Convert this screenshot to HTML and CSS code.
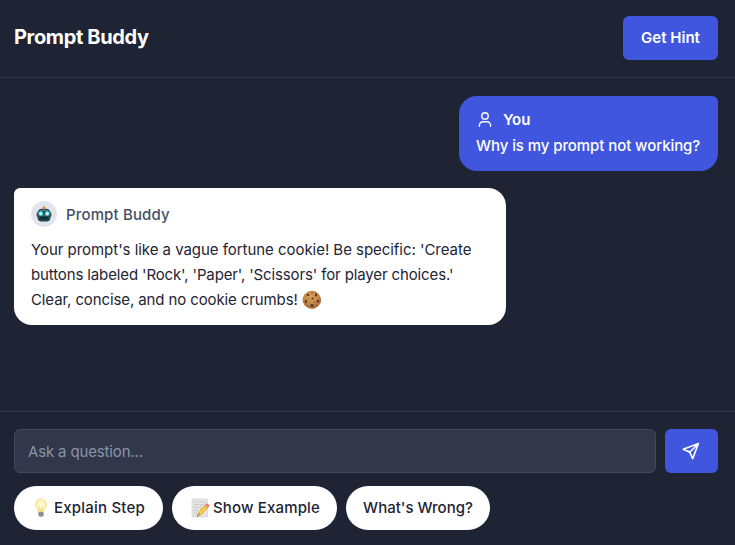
FILE: index.html
```html
<!DOCTYPE html>
<html lang="en">
<head>
<meta charset="utf-8">
<title>Prompt Buddy</title>
<link rel="stylesheet" href="styles.css">
</head>
<body>
<div class="app">
  <header class="header">
    <h1 class="title">Prompt Buddy</h1>
    <button class="hint">Get Hint</button>
  </header>
  <main class="messages">
    <section class="bubble user">
      <div class="user-head">
        <svg class="person" viewBox="0 0 18 18" fill="none" stroke="currentColor" stroke-width="1.400" stroke-linecap="round"><circle cx="9" cy="5.900" r="3.200"/><path d="M3.400 16.300v-.9a3.600 3.600 0 0 1 3.600-3.600h4a3.600 3.600 0 0 1 3.600 3.600v.9"/></svg>
        <span class="you">You</span>
      </div>
      <p class="question">Why is my prompt not working?</p>
    </section>
    <section class="bubble bot">
      <div class="bot-head">
        <span class="avatar">
          <svg class="robot" viewBox="0 0 16 16"><path d="M8 1v4" stroke="#a65b31" stroke-width="1.2"/><circle cx="8" cy="1.8" r="1.4" fill="#ed9240"/><rect x=".6" y="6" width="14.8" height="5" rx="1.6" fill="#8f3b35"/><path d="M1.600 6q1-3.400 6.400-3.400T14.400 6v7q-1 2.400-3 2.400H4.600Q2.600 15.400 1.600 13z" fill="#214953"/><path d="M3.500 5q1-1.500 4.500-1.500T12.500 5z" fill="#4f8087"/><circle cx="8" cy="1.800" r="1.300" fill="#ed9240"/><circle cx="4.700" cy="7.600" r="2.500" fill="#39c4d8"/><circle cx="11.300" cy="7.600" r="2.500" fill="#39c4d8"/><circle cx="4.700" cy="7.600" r="1.400" fill="#d8ffff"/><circle cx="11.300" cy="7.600" r="1.400" fill="#d8ffff"/><path d="M8 7.800 9 9.800H7z" fill="#e0523b"/><rect x="4.200" y="11" width="7.600" height="2.600" rx=".8" fill="#102d36"/></svg>
        </span>
        <span class="name">Prompt Buddy</span>
      </div>
      <p class="answer"><span class="line l1">Your prompt's like a vague fortune cookie! Be specific: 'Create</span> <span class="line l2">buttons labeled 'Rock', 'Paper', 'Scissors' for player choices.'</span> <span class="line l3"><span>Clear, concise, and no cookie crumbs!</span><svg class="cookie" viewBox="0 0 20 20"><defs><radialGradient id="dough" cx=".45" cy=".35" r=".65"><stop offset="0" stop-color="#dda45d"/><stop offset=".65" stop-color="#c18543"/><stop offset="1" stop-color="#986030"/></radialGradient></defs><path d="M10 1.200 14 2l3 3 1.800 4-.5 4-2.800 3.500-4 2-4.500-.4-3.700-2.300L1.200 12l-.1-4L3 4.300 6 2z" fill="url(#dough)" stroke="#ad7039" stroke-width=".7" stroke-linejoin="round"/><g fill="#513323"><ellipse cx="6" cy="5" rx="1.400" ry="1"/><ellipse cx="14" cy="5" rx="1.100" ry="1.400"/><circle cx="10.500" cy="8.500" r="1.100"/><ellipse cx="4" cy="11.500" rx="1.100" ry="1.400"/><circle cx="15.800" cy="11" r="1.200"/><circle cx="10" cy="15.500" r="1.400"/></g><g fill="#805025"><circle cx="10" cy="3" r=".7"/><circle cx="7" cy="9" r=".6"/><circle cx="12.500" cy="12" r=".7"/></g></svg></span></p>
    </section>
  </main>
  <footer class="footer">
    <div class="ask">
      <input class="input" type="text" placeholder="Ask a question…" aria-label="Ask a question">
      <button class="send" aria-label="Send"><svg class="plane" viewBox="0 0 18 18" fill="none" stroke="currentColor" stroke-width="1.600" stroke-linejoin="round" stroke-linecap="round"><path d="M16.400 1.500 1.200 7.200 7.800 10.300 10.700 16.600zM7.800 10.300 16.400 1.500M8 10.100l-1.900-.8"/></svg></button>
    </div>
    <div class="chips">
      <button class="chip explain"><svg class="bulb" viewBox="0 0 14 20"><defs><radialGradient id="glow" cx=".5" cy=".45" r=".55"><stop offset="0" stop-color="#fffde8"/><stop offset=".6" stop-color="#fff4b8"/><stop offset="1" stop-color="#f5db78"/></radialGradient></defs><path d="M7 1a5.500 5.500 0 0 0-5.500 5.500C1.500 9.500 4 10.500 4.300 14h5.400c.3-3.500 2.800-4.500 2.800-7.500A5.500 5.500 0 0 0 7 1z" fill="url(#glow)" stroke="#f2dc8e" stroke-width=".6"/><path d="M5.500 8 6.300 13h1.400L8.500 8" fill="none" stroke="#e8c866" stroke-width=".6"/><path d="M4.400 14h5.200v3.300L8.200 19H5.800l-1.400-1.700z" fill="#a4a5a4"/><path d="M4.400 15.200h5.200M4.600 16.900h4.800" stroke="#626668" stroke-width=".6"/></svg><span>Explain Step</span></button>
      <button class="chip example"><svg class="memo" viewBox="0 0 18 20"><path d="M1 1h15.500v18H1z" fill="#e5e5e5" stroke="#cfcfcf" stroke-width=".6"/><path d="M3 4h3m1 0h3m1 0h3M3 6.800h5m1 0h4M3 9.600h4m1 0h3M3 12.400h4M3 15.200h3" stroke="#bbb" stroke-width=".8"/><path d="m6 18.500 1.300-4.600 7.200-7.400 3 2.900-7.300 7.500z" fill="#f1b72f"/><path d="m8.800 15.500 7.200-7.400" stroke="#ffdc62" stroke-width="1.200"/><path d="m14.500 6.500 1.200-1.100q1.200-.2 2.300 1.600l.1 1.500-.7.800z" fill="#ea756b"/><path d="m13.700 7.300 3 2.900" stroke="#87949b" stroke-width="1"/><path d="m6 18.500 1.300-4.600 2.900 3z" fill="#d1a46b"/><path d="m6 18.500.4-1.500 1.100 1z" fill="#333"/></svg><span>Show Example</span></button>
      <button class="chip wrong"><span>What's Wrong?</span></button>
    </div>
  </footer>
</div>
</body>
</html>
```
FILE: styles.css
```css
* { box-sizing: border-box; }
body { margin: 0; background: #1e2434; font-family: Inter, "Liberation Sans", sans-serif; font-size: 15px; }
button, input { font: inherit; }
button { border: 0; padding: 0; }
h1, p { margin: 0; }
svg { display: block; flex: none; }
.app { height: 545px; display: flex; flex-direction: column; overflow: hidden; }
.header { height: 78px; padding: 0 17px 2px 14px; display: flex; align-items: center; justify-content: space-between; border-bottom: 1px solid #323849; }
.title { color: #fff; font-size: 20px; line-height: 28px; font-weight: 700; letter-spacing: -0.35px; padding-bottom: 1px; }
.hint { width: 95px; height: 44px; border-radius: 6px; background: #4056df; color: #fff; font-weight: 600; white-space: nowrap; }
.messages { flex: 1; padding: 18px 17px 0 14px; display: flex; flex-direction: column; gap: 17px; }
.bubble { white-space: nowrap; }
.user { align-self: flex-end; width: 259px; height: 75px; padding: 11px 17px; border-radius: 18px 6px 18px 18px; background: #4056df; color: #fff; }
.user-head { height: 26px; padding-bottom: 2px; display: flex; align-items: center; gap: 9px; }
.person { width: 18px; height: 18px; }
.you { font-weight: 600; letter-spacing: -0.1px; }
.question { line-height: 25px; font-weight: 500; letter-spacing: -0.08px; }
.bot { width: 492px; height: 137px; padding: 13px 17px; border-radius: 6px 18px 18px 18px; background: #fff; color: #1e2434; }
.bot-head { display: flex; align-items: center; gap: 9px; height: 26px; margin-bottom: 10px; }
.avatar { width: 26px; height: 26px; border-radius: 50%; background: #e1e5ee; display: grid; place-items: center; }
.robot { width: 16px; height: 16px; }
.name { color: #465066; font-weight: 500; letter-spacing: 0.15px; }
.answer { line-height: 25px; }
.line { display: block; }
.l1 { letter-spacing: -0.04px; }
.l2 { letter-spacing: -0.13px; }
.l3 { display: flex; align-items: center; gap: 4px; letter-spacing: -0.11px; }
.cookie { width: 20px; height: 20px; }
.footer { height: 134px; padding: 17px 17px 15px 14px; border-top: 1px solid #323849; }
.ask { display: flex; gap: 9px; }
.input { flex: 1; height: 44px; padding: 0 13px; border: 1px solid #42495c; border-radius: 6px; background: #32384a; color: #fff; letter-spacing: -0.15px; }
.input::placeholder { color: #8994aa; opacity: 1; }
.send { width: 53px; height: 44px; padding-right: 1px; border-radius: 6px; background: #4056df; color: #fff; display: grid; place-items: center; }
.plane { width: 18px; height: 18px; }
.chips { display: flex; gap: 9px; margin-top: 13px; }
.chip { height: 44px; padding-bottom: 1px; border-radius: 22px; background: #fff; color: #1e2434; display: flex; align-items: center; justify-content: center; font-weight: 500; white-space: nowrap; }
.explain { width: 149px; padding-left: 2px; gap: 6px; letter-spacing: 0.22px; }
.example { width: 165px; padding-left: 2px; gap: 4px; letter-spacing: 0.16px; }
.wrong { width: 144px; }
.bulb { width: 14px; height: 20px; }
.memo { width: 18px; height: 20px; }
```
